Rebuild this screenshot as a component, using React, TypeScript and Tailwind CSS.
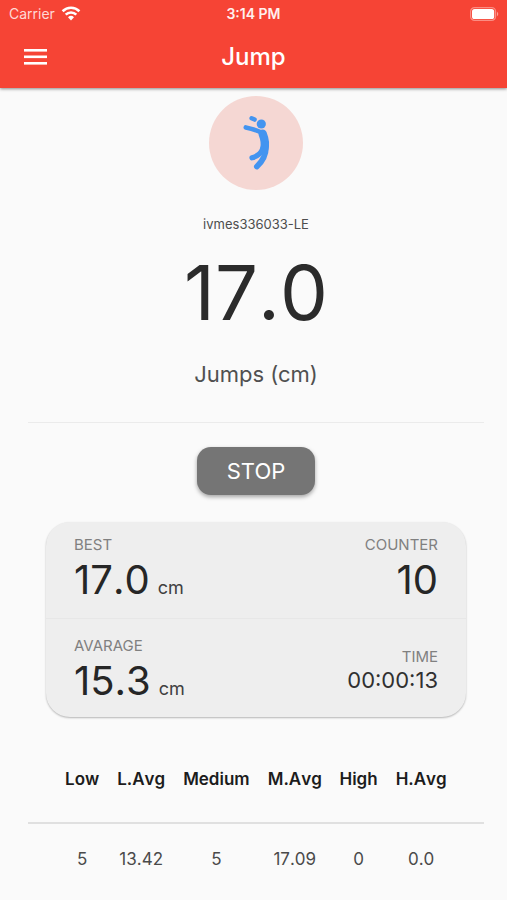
import React from "react";

const columns: { label: string; value: string }[] = [
  { label: "Low", value: "5" },
  { label: "L.Avg", value: "13.42" },
  { label: "Medium", value: "5" },
  { label: "M.Avg", value: "17.09" },
  { label: "High", value: "0" },
  { label: "H.Avg", value: "0.0" },
];

function StatusBar() {
  return (
    <div className="grid h-7 grid-cols-3 items-center px-2 text-sm">
      <div className="flex items-center gap-1.5 pl-px text-[#ffd9d5]">
        <span>Carrier</span>
        <svg width="20" height="16" viewBox="0 0 20 16" fill="none" stroke="#fff" strokeWidth="2.6" aria-hidden="true">
          <path d="M1.6 5.2a12 12 0 0 1 16.8 0" />
          <path d="M4.7 8.6a7.6 7.6 0 0 1 10.6 0" />
          <path d="M10 14.4l-3-3.2a4.4 4.4 0 0 1 6 0z" fill="#fff" stroke="none" />
        </svg>
      </div>
      <span className="text-center text-sm font-semibold text-[#fff0ee]">3:14 PM</span>
      <svg className="justify-self-end" width="29" height="14" viewBox="0 0 29 14" aria-hidden="true">
        <rect x="0.6" y="0.6" width="25" height="12.8" rx="4" fill="none" stroke="#fb8d83" strokeWidth="1.2" />
        <rect x="2" y="2" width="22.2" height="10" rx="2.6" fill="#fff" />
        <path d="M27 4.8c1.7.8 1.7 3.6 0 4.4z" fill="#fb9d95" />
      </svg>
    </div>
  );
}

function JumperIcon() {
  return (
    <svg width="94" height="94" viewBox="0 0 94 94" fill="none" stroke="#4394f0" strokeLinecap="round" strokeLinejoin="round" aria-hidden="true">
      <circle cx="52.3" cy="28" r="4.6" fill="#4394f0" stroke="none" />
      <path d="M42.6 22.2l3 1.4" strokeWidth="4.4" />
      <path d="M36.8 31.4c5 1 9 2.200 14.600 4.600" strokeWidth="4.6" />
      <path d="M53.600 37.600c2.400 6 2.800 11.400 1.600 15.600" strokeWidth="8.4" />
      <path d="M53.600 53c-1.800 4.800-5.600 7.400-10.600 8.800" strokeWidth="5.2" />
      <path d="M57 48c.6 9.400-3 17-9.200 22.600" strokeWidth="5.6" />
    </svg>
  );
}

function Stat({ label, value, unit }: { label: string; value: string; unit?: string }) {
  return (
    <div>
      <div className="text-[15px] leading-5 text-[#808080]">{label}</div>
      <div className="text-[40px] leading-[50px] text-[#262626] [font-kerning:none]">
        {value}
        {unit && <span className="ml-2 text-lg text-[#404040]">{unit}</span>}
      </div>
    </div>
  );
}

export default function App() {
  return (
    <div className="min-h-screen bg-[#fafafa] font-['Inter','Liberation_Sans',sans-serif]">
      <header className="relative bg-[#f64435] text-white shadow-[0_1px_3px_rgba(0,0,0,0.45)]">
        <StatusBar />
        <div className="grid h-15 grid-cols-3 items-center px-6 pb-0.5">
          <button type="button" aria-label="Open menu" className="w-6">
            <svg width="23" height="16" viewBox="0 0 23 16" fill="#fff" aria-hidden="true">
              <rect y="0" width="23" height="2.6" />
              <rect y="6.5" width="23" height="2.6" />
              <rect y="13" width="23" height="2.6" />
            </svg>
          </button>
          <h1 className="text-center text-2xl font-medium">Jump</h1>
        </div>
      </header>

      <main className="pr-[23px] pl-7">
        <section className="flex flex-col items-center border-b border-[#ebebeb] pt-2 pb-8">
          <div className="rounded-full bg-[#f5d7d3]">
            <JumperIcon />
          </div>
          <p className="mt-6 text-[13px] leading-5 text-[#4d4d4d]">ivmes336033-LE</p>
          <p className="mt-3.5 text-[76px] leading-[88px] text-[#2b2b2b] [font-kerning:none]">17.0</p>
          <p className="mt-[22px] text-[22px] leading-8 text-[#505050]">Jumps (cm)</p>
        </section>

        <div className="mt-6 flex justify-center">
          <button
            type="button"
            className="h-12 rounded-[14px] bg-[#757575] px-[30px] text-[22px] text-white shadow-[0_2px_4px_rgba(0,0,0,0.35)]"
          >
            STOP
          </button>
        </div>

        <section className="mx-[18px] mt-[27px] rounded-3xl bg-[#eeeeee] shadow-[0_1px_2px_rgba(0,0,0,0.28)]">
          <div className="flex h-[97px] justify-between border-b border-[#e7e7e7] px-7 pt-[13px]">
            <Stat label="BEST" value="17.0" unit="cm" />
            <div className="text-right">
              <Stat label="COUNTER" value="10" />
            </div>
          </div>
          <div className="flex h-[98px] justify-between px-7 pt-[17px]">
            <Stat label="AVARAGE" value="15.3" unit="cm" />
            <div className="pt-[11px] text-right">
              <div className="text-[15px] leading-5 text-[#808080]">TIME</div>
              <div className="text-[22px] leading-[26px] text-[#303030]">00:00:13</div>
            </div>
          </div>
        </section>

        <table className="mt-5 w-full border-collapse text-center text-[17px] [font-kerning:none]">
          <thead>
            <tr className="h-[86px] border-b-2 border-[#e0e0e0] text-[#1c1c1c]">
              {columns.map((c) => (
                <th key={c.label} scope="col" className="px-2 font-semibold first:pl-9 last:pr-9">
                  {c.label}
                </th>
              ))}
            </tr>
          </thead>
          <tbody>
            <tr className="h-[72px] text-[#4a4a4a]">
              {columns.map((c) => (
                <td key={c.label} className="px-2 first:pl-9 last:pr-9">
                  {c.value}
                </td>
              ))}
            </tr>
          </tbody>
        </table>
      </main>
    </div>
  );
}
